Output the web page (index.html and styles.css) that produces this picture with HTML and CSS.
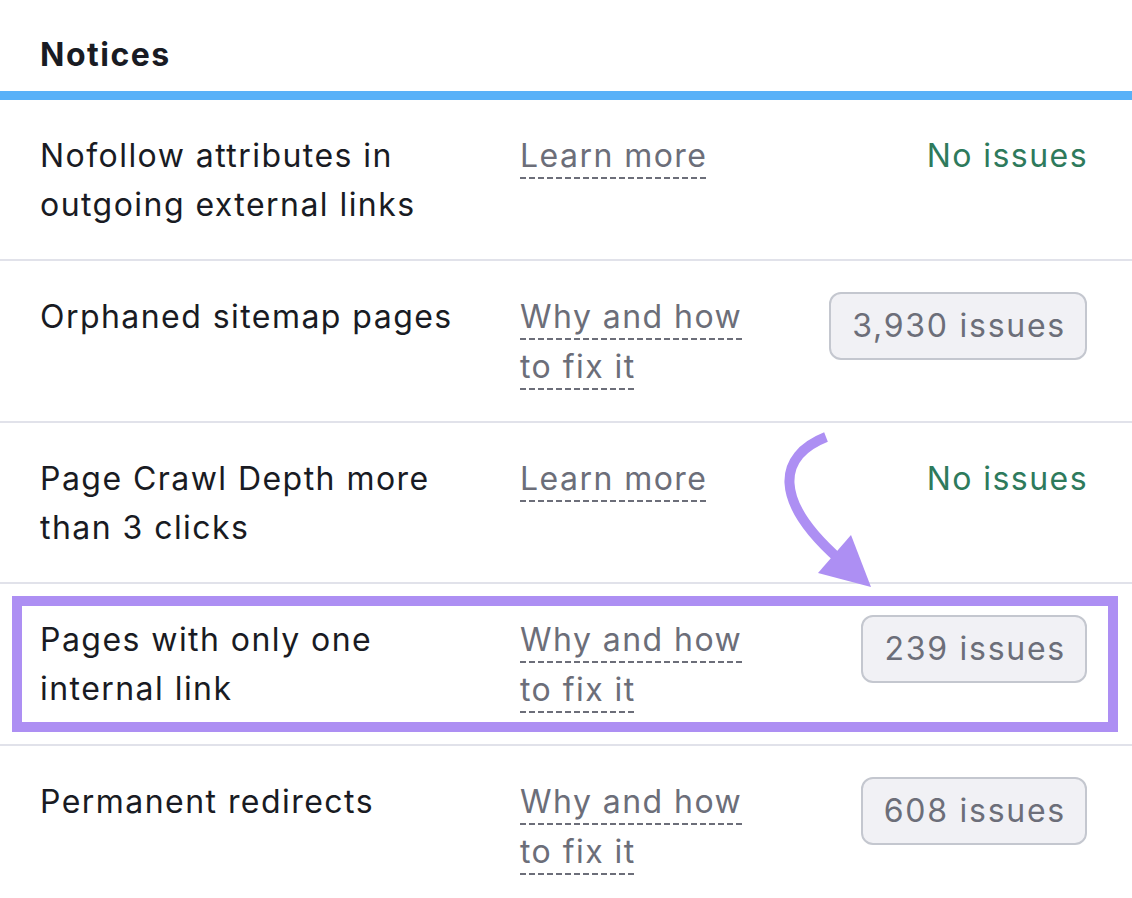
FILE: index.html
```html
<!DOCTYPE html>
<html>
<head>
<meta charset="utf-8">
<link rel="stylesheet" href="styles.css">
</head>
<body>
<div class="panel">
  <div class="header"><h2 class="title">Notices</h2></div>
  <div class="rows">
    <div class="row">
      <div class="name">Nofollow attributes in outgoing external links</div>
      <div class="help"><span class="link">Learn more</span></div>
      <div class="status"><span class="ok">No issues</span></div>
    </div>
    <div class="row">
      <div class="name">Orphaned sitemap pages</div>
      <div class="help"><span class="link">Why and how</span> <span class="link">to fix it</span></div>
      <div class="status"><span class="badge">3,930 issues</span></div>
    </div>
    <div class="row">
      <div class="name">Page Crawl Depth more than 3 clicks</div>
      <div class="help"><span class="link">Learn more</span></div>
      <div class="status"><span class="ok">No issues</span></div>
    </div>
    <div class="row highlighted">
      <div class="name">Pages with only one internal link</div>
      <div class="help"><span class="link">Why and how</span> <span class="link">to fix it</span></div>
      <div class="status"><span class="badge">239 issues</span></div>
    </div>
    <div class="row">
      <div class="name">Permanent redirects</div>
      <div class="help"><span class="link">Why and how</span> <span class="link">to fix it</span></div>
      <div class="status"><span class="badge">608 issues</span></div>
    </div>
    <svg class="arrow" width="1132" height="800" viewBox="0 100 1132 800" aria-hidden="true">
      <path d="M826 437 C778 456 772 500 840 560" fill="none" stroke="#ad8ff3" stroke-width="10"/>
      <polygon points="818,573 851,535 871,587" fill="#ad8ff3"/>
    </svg>
  </div>
</div>
</body>
</html>
```

FILE: styles.css
```css
* { box-sizing: border-box; }
html, body { margin: 0; padding: 0; background: #fff; }
body {
  font-family: Inter, "Noto Sans", sans-serif;
  color: #191b23;
  width: 1132px;
  height: 898px;
  overflow: hidden;
  letter-spacing: 1.45px;
}
.panel { width: 1132px; }
.header {
  height: 100px;
  border-bottom: 9px solid #59b1f8;
  padding: 0 40px;
  display: flex;
  align-items: flex-start;
}
.title {
  margin: 0;
  padding-top: 35px;
  font-size: 32px;
  line-height: 40px;
  font-weight: 700;
  letter-spacing: 1.5px;
}
.rows { position: relative; }
.row {
  position: relative;
  display: grid;
  grid-template-columns: 480px 240px 1fr;
  padding: 31px 45px 0 40px;
  border-bottom: 2px solid #e1e2ea;
  font-size: 32px;
  line-height: 49px;
  height: 161.4px;
}
.name { padding-right: 20px; }
.help {
  color: #6c6e79;
  line-height: 50px;
}
.link {
  padding-bottom: 4px;
  background-image: linear-gradient(to right, #6c6e79 0 6px, transparent 6px 9px);
  background-size: 9px 2px;
  background-repeat: repeat-x;
  background-position: 0 100%;
}
.status {
  display: flex;
  justify-content: flex-end;
  align-items: flex-start;
}
.ok { color: #2e7a5c; margin-right: -1px; }
.badge {
  display: inline-block;
  color: #6c6e79;
  background: #f1f1f5;
  border: 2px solid #c4c7cf;
  border-radius: 12px;
  padding: 0 19px 0 21px;
  height: 68px;
  line-height: 64px;
  letter-spacing: 1.75px;
}
.highlighted::after {
  content: "";
  position: absolute;
  left: 12px;
  right: 14px;
  top: 12px;
  bottom: 12px;
  border: 10px solid #ad8ff3;
  pointer-events: none;
}
.arrow {
  position: absolute;
  left: 0;
  top: 0;
  pointer-events: none;
}
```
